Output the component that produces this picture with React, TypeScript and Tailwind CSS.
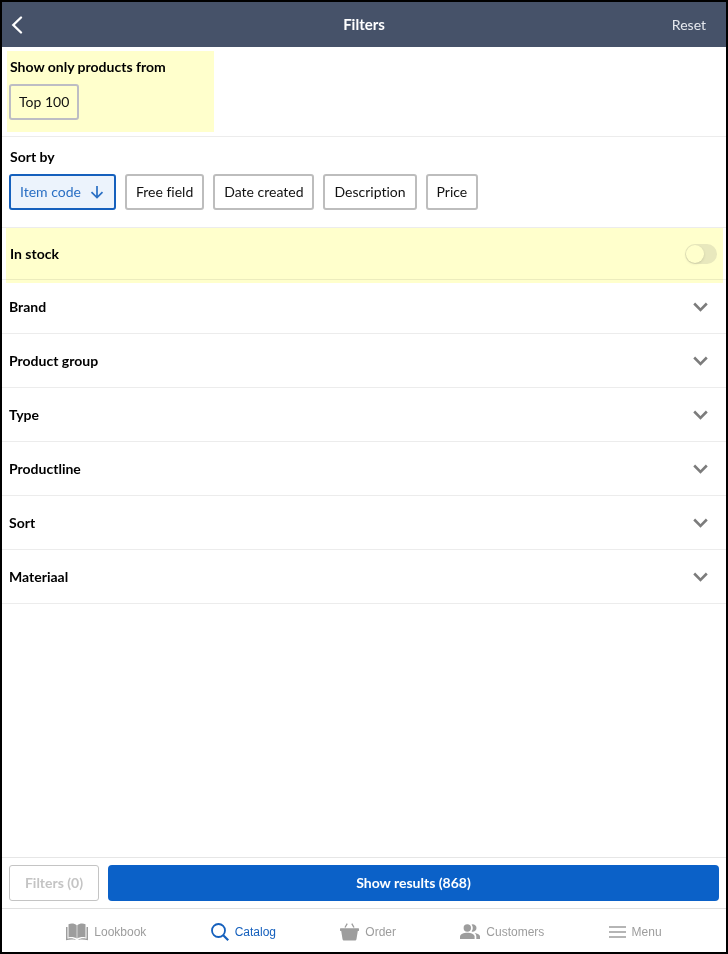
import React, { useState } from 'react';

const sortOptions = ['Item code', 'Free field', 'Date created', 'Description', 'Price'];

const groups = ['Brand', 'Product group', 'Type', 'Productline', 'Sort', 'Materiaal'];

const tabs = [
  {
    label: 'Lookbook',
    icon: (
      <svg width="22" height="18" viewBox="0 0 22 18" fill="currentColor">
        <path d="M2.500 1.200C5.200 0 8.700.3 10.700 2.200V15.600C8.500 14 5.500 13.700 2.500 14.400z" />
        <path d="M19.500 1.200C16.800 0 13.300.3 11.300 2.200V15.600C13.500 14 16.500 13.700 19.500 14.400z" />
        <path d="M0 4h1.500v11.800c3.400-.8 6.200-.5 8.500 1.100-3.300-.7-6.500-.6-10 .4z" />
        <path d="M22 4h-1.500v11.800c-3.400-.8-6.200-.5-8.500 1.100 3.300-.7 6.500-.6 10 .4z" />
      </svg>
    ),
  },
  {
    label: 'Catalog',
    active: true,
    icon: (
      <svg width="18" height="18" viewBox="0 0 18 18" fill="none" stroke="currentColor" strokeWidth="1.8">
        <circle cx="7.500" cy="7.500" r="6.500" />
        <path d="M12.200 12.200l5 5" strokeWidth="2.200" />
      </svg>
    ),
  },
  {
    label: 'Order',
    icon: (
      <svg width="19" height="18" viewBox="0 0 19 18" fill="currentColor">
        <path d="M.6 5.300h17.800c.4 0 .6.200.6.500v1.700c0 .3-.2.500-.5.500h-.7l-1.300 8.100c-.2 1-.8 1.500-1.700 1.500H4.200c-.9 0-1.500-.5-1.700-1.500L1.200 8H.5C.2 8 0 7.800 0 7.500V5.800c0-.3.2-.5.6-.5z" />
        <path d="M5 4.500L7.200.7M14 4.500L11.800.7" stroke="currentColor" strokeWidth="1.300" fill="none" />
      </svg>
    ),
  },
  {
    label: 'Customers',
    icon: (
      <svg width="20" height="16" viewBox="0 0 20 16" fill="currentColor">
        <circle cx="7.300" cy="4" r="3.700" />
        <path d="M0 15v-2.400c0-2.500 3.800-3.800 7.300-3.800s7.300 1.300 7.300 3.800V15z" />
        <path d="M11.600.5a3.700 3.700 0 1 1 0 7c1.600-1.900 1.600-5.100 0-7z" />
        <path d="M14.600 9.100c2.900.5 5.400 1.700 5.400 3.500V15h-3.700v-2.400c0-1.400-.6-2.600-1.700-3.500z" />
      </svg>
    ),
  },
  {
    label: 'Menu',
    icon: (
      <svg width="17" height="14" viewBox="0 0 17 14" stroke="currentColor" strokeWidth="1.600">
        <path d="M0 2h17M0 7h17M0 12h17" />
      </svg>
    ),
  },
];

const App: React.FC = () => {
  const [sortBy, setSortBy] = useState('Item code');
  const [inStock, setInStock] = useState(false);

  return (
    <div className="flex min-h-screen flex-col border-2 border-black bg-white font-['Lato',sans-serif] text-sm text-[#111111] [font-variant-ligatures:none]">
      <header className="grid h-[45px] grid-cols-3 items-center bg-[#465269] px-2 text-white">
        <button type="button" aria-label="Back" className="justify-self-start">
          <svg width="13" height="18" viewBox="0 0 13 18" fill="none" stroke="currentColor" strokeWidth="2.300" strokeLinecap="round">
            <path d="M11 1.500L3.300 9l7.700 7.500" />
          </svg>
        </button>
        <h1 className="text-center text-[15px] font-bold">Filters</h1>
        <button type="button" className="justify-self-end pr-3 text-[#e6e9ef]">Reset</button>
      </header>

      <main className="flex-1">
        {/* Quick filter */}
        <section className="border-b border-[#ececec] px-1 py-1">
          <div className="ml-px h-[81px] w-[207px] bg-[#ffffcc] px-0.5 pt-1.5">
            <h2 className="pl-px leading-5 font-bold text-black">Show only products from</h2>
            <button type="button" className="mt-[7px] h-9 rounded-[3px] border-2 border-[#bdbdc4] px-2">
              Top 100
            </button>
          </div>
        </section>

        {/* Sorting */}
        <section className="border-b border-[#ececec] px-[7px] pt-2.5 pb-[17px]">
          <h2 className="pl-px leading-5 font-bold text-black">Sort by</h2>
          <div className="mt-[7px] flex flex-wrap gap-[9px]">
            {sortOptions.map((option) => (
              <button
                key={option}
                type="button"
                onClick={() => setSortBy(option)}
                className={
                  option === sortBy
                    ? 'flex h-9 items-center gap-2 rounded-[3px] border-2 border-[#1560bd] bg-[#ecf3fc] px-[9px] text-[#2a6fc4]'
                    : 'flex h-9 items-center rounded-[3px] border-2 border-[#bdbdbd] px-[9px]'
                }
              >
                {option}
                {option === sortBy && (
                  <svg width="16" height="14" viewBox="0 0 16 14" fill="none" stroke="currentColor" strokeWidth="1.700">
                    <path d="M8 1v11.500M2.500 7.200L8 12.600l5.500-5.400" />
                  </svg>
                )}
              </button>
            ))}
          </div>
        </section>

        {/* Stock toggle, marked with a highlighter strip */}
        <label className="relative flex h-[52px] cursor-pointer items-center justify-between border-b border-[#ececec] pr-[9px] pl-2 font-bold text-black">
          In stock
          <input
            type="checkbox"
            role="switch"
            checked={inStock}
            onChange={(e) => setInStock(e.target.checked)}
            className="h-5 w-8 appearance-none rounded-full bg-[#e8e8ec] before:m-px before:block before:size-[18px] before:rounded-full before:bg-white before:shadow-sm checked:bg-[#0b61c8] checked:before:translate-x-3"
          />
          <span className="pointer-events-none absolute top-0 right-[3px] -bottom-1 left-1 bg-[#ffffcc] mix-blend-multiply" />
        </label>

        {groups.map((group) => (
          <button
            key={group}
            type="button"
            className="flex h-[54px] w-full items-center justify-between border-b border-[#ececec] pr-[18px] pl-[7px] font-bold text-black"
          >
            {group}
            <svg width="15" height="10" viewBox="0 0 15 10" fill="none" stroke="#7c7c7c" strokeWidth="2.600">
              <path d="M1.200 1.500l6.300 6.300 6.300-6.300" />
            </svg>
          </button>
        ))}
      </main>

      <footer>
        <div className="flex gap-[9px] border-t border-[#e6e6e6] px-[7px] py-[7px]">
          <button type="button" disabled className="h-9 w-[90px] rounded-[3px] border border-[#c4c4c4] font-bold text-[#c4c4c4]">
            Filters (0)
          </button>
          <button type="button" className="h-9 flex-1 rounded-[4px] bg-[#0b61c8] font-bold text-white">
            Show results (868)
          </button>
        </div>
        <nav className="flex h-11 items-center justify-evenly border-t border-[#e0e0e0] pt-0.5 font-['Liberation_Sans',sans-serif] text-xs">
          {tabs.map((tab) => (
            <a
              key={tab.label}
              href="#"
              className={tab.active ? 'flex items-center gap-1.5 text-[#1560bd]' : 'flex items-center gap-1.5 text-[#9d9d9d]'}
            >
              {tab.icon}
              {tab.label}
            </a>
          ))}
        </nav>
      </footer>
    </div>
  );
};

export default App;
